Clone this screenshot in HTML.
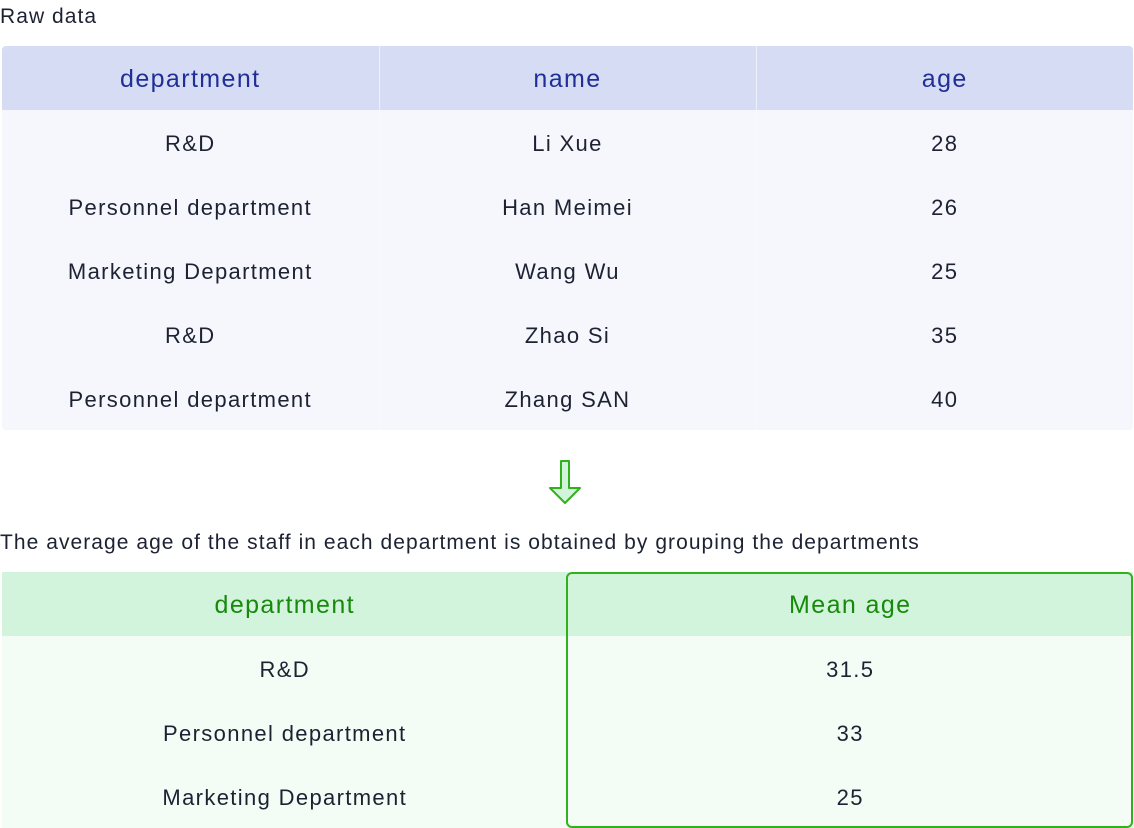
<!DOCTYPE html>
<html><head><style>
body{margin:0;width:1134px;height:828px;background:#fff;font-family:"Liberation Sans",sans-serif;color:#1d2233;position:relative;overflow:hidden}
.t{position:absolute;font-size:21px;letter-spacing:1.05px}
table{position:absolute;border-collapse:collapse;table-layout:fixed}
td,th{text-align:center;font-size:22px;letter-spacing:1.35px;padding:3px 0 0;height:61px}
th{font-weight:normal;font-size:25px;letter-spacing:1.4px}
#t1{left:2px;top:46px;width:1131px;border-radius:4px;overflow:hidden}
#t1 th{background:#d6dcf4;color:#1f2f96;border-left:1px solid #eef0fb}
#t1 td{background:#f5f7fd;border-left:1px solid #f8f9fe}
#t1 th:first-child,#t1 td:first-child{border-left:none}
#t2{left:2px;top:572px;width:1131px}
#t2 th{background:#d3f4dc;color:#178a0b}
#t2 td{background:#f3fdf5}
.box{position:absolute;left:566px;top:572px;width:563px;height:252px;border:2px solid #31b11c;border-radius:6px}
</style></head><body>
<div class="t" style="left:0;top:5px">Raw data</div>
<table id="t1">
<tr><th>department</th><th>name</th><th>age</th></tr>
<tr><td>R&amp;D</td><td>Li Xue</td><td>28</td></tr>
<tr><td>Personnel department</td><td>Han Meimei</td><td>26</td></tr>
<tr><td>Marketing Department</td><td>Wang Wu</td><td>25</td></tr>
<tr><td>R&amp;D</td><td>Zhao Si</td><td>35</td></tr>
<tr><td>Personnel department</td><td>Zhang SAN</td><td>40</td></tr>
</table>
<svg style="position:absolute;left:540px;top:455px" width="56" height="56"><path d="M18 6 H26 V33 H37 L22 48 L7 33 H18 Z" transform="translate(3,0)" fill="#d3f4dc" stroke="#31b11c" stroke-width="2" stroke-linejoin="round"/></svg>
<div class="t" style="left:0;top:531px">The average age of the staff in each department is obtained by grouping the departments</div>
<table id="t2">
<tr><th>department</th><th>Mean age</th></tr>
<tr><td>R&amp;D</td><td>31.5</td></tr>
<tr><td>Personnel department</td><td>33</td></tr>
<tr><td>Marketing Department</td><td>25</td></tr>
</table>
<div class="box"></div>
</body></html>
